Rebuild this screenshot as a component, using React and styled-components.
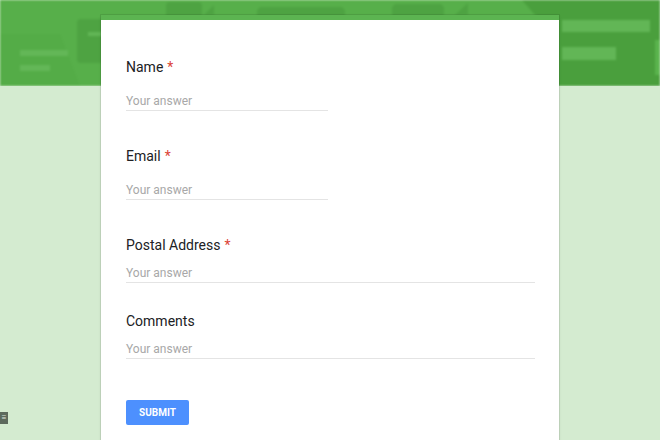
import React from "react";
import styled, {createGlobalStyle} from "styled-components";

const GlobalStyle = createGlobalStyle`
    html, body {
        margin: 0;
        padding: 0;
        background: #d4ebd0;
        font-family: Roboto, "Liberation Sans", Arial, sans-serif;
        overflow: hidden;
    }
`;

const fields = [
    {label: "Name", required: true, wide: false},
    {label: "Email", required: true, wide: false},
    {label: "Postal Address", required: true, wide: true},
    {label: "Comments", required: false, wide: true},
];

function BannerArt() {
    return (
        <svg width="660" height="86" viewBox="0 0 660 86" preserveAspectRatio="none">
            <rect width="660" height="86" fill="#57af4a" />
            <polygon points="0,34 60,34 80,86 0,86" fill="#54ac47" />
            <polygon points="522,0 660,0 660,86 545,86 545,20 535,15" fill="#4a9f3d" />
            <rect x="562" y="20" width="88" height="12" fill="#62b656" />
            <rect x="562" y="47" width="54" height="13" fill="#62b656" />
            <rect x="655" y="40" width="10" height="35" fill="#5ab44d" />
            <rect x="77" y="19" width="32" height="44" rx="4" fill="#4ea342" />
            <rect x="88" y="32" width="16" height="4" fill="#62b656" />
            <rect x="20" y="50" width="48" height="6" fill="#63b757" />
            <rect x="20" y="65" width="30" height="6" fill="#63b757" />
            <rect x="166" y="2" width="36" height="16" rx="4" fill="#4ea342" />
            <polygon points="204,15 214,5 214,15" fill="#4ea342" />
            <rect x="257" y="7" width="88" height="12" rx="5" fill="#4ea342" />
            <rect x="392" y="4" width="52" height="14" rx="5" fill="#4ea342" />
            <polygon points="455,15 468,3 468,15" fill="#4ea342" />
        </svg>
    );
}

function Field({label, required, wide}) {
    return (
        <FieldStyled $wide={wide}>
            <label>
                {label}
                {required && <span className="req">*</span>}
            </label>
            <div className="answer">Your answer</div>
        </FieldStyled>
    );
}

function App() {
    return (
        <>
            <GlobalStyle />
            <PageStyled>
                <Banner>
                    <BannerArt />
                </Banner>
                <Card>
                    {fields.map((f) => (
                        <Field key={f.label} {...f} />
                    ))}
                    <SubmitButton>SUBMIT</SubmitButton>
                </Card>
                <FeedbackTab>≡</FeedbackTab>
            </PageStyled>
        </>
    );
}

const PageStyled = styled.div`
    position: relative;
    width: 660px;
    height: 440px;
    overflow: hidden;
    background: #d4ebd0;
`;

const Banner = styled.div`
    height: 86px;
    overflow: hidden;
    svg {
        display: block;
        filter: blur(1px);
    }
`;

const Card = styled.div`
    position: relative;
    width: 458px;
    margin: -71px auto 0;
    min-height: 460px;
    background: #fff;
    border-top: 5px solid #5cb451;
    box-shadow: 0 0 0 1px rgba(0, 0, 0, 0.08), 0 1px 3px rgba(0, 0, 0, 0.1);
    padding: 38px 25px 0;
    box-sizing: border-box;
`;

const FieldStyled = styled.div`
    width: ${(p) => (p.$wide ? "409px" : "202px")};
    margin-bottom: ${(p) => (p.$wide ? "29px" : "36px")};
    label {
        display: block;
        font-size: 14px;
        line-height: 18px;
        color: #202124;
        .req {
            color: #db4437;
            margin-left: 4px;
        }
    }
    .answer {
        margin-top: ${(p) => (p.$wide ? "10px" : "16px")};
        font-size: 12px;
        line-height: 18px;
        color: #a8a8a8;
        border-bottom: 1px solid #e4e4e4;
    }
`;

const SubmitButton = styled.button`
    display: block;
    margin-top: 41px;
    width: 63px;
    height: 25px;
    border: none;
    border-radius: 2px;
    background: #4d90fe;
    color: #fff;
    font-family: Roboto, "Liberation Sans", Arial, sans-serif;
    font-size: 10px;
    font-weight: 700;
    padding: 0;
`;

const FeedbackTab = styled.div`
    position: absolute;
    left: 0;
    top: 412px;
    width: 8px;
    height: 12px;
    background: #5d6a5d;
    color: #dfe6df;
    font-size: 8px;
    line-height: 12px;
    text-align: center;
    overflow: hidden;
`;

export default App;
